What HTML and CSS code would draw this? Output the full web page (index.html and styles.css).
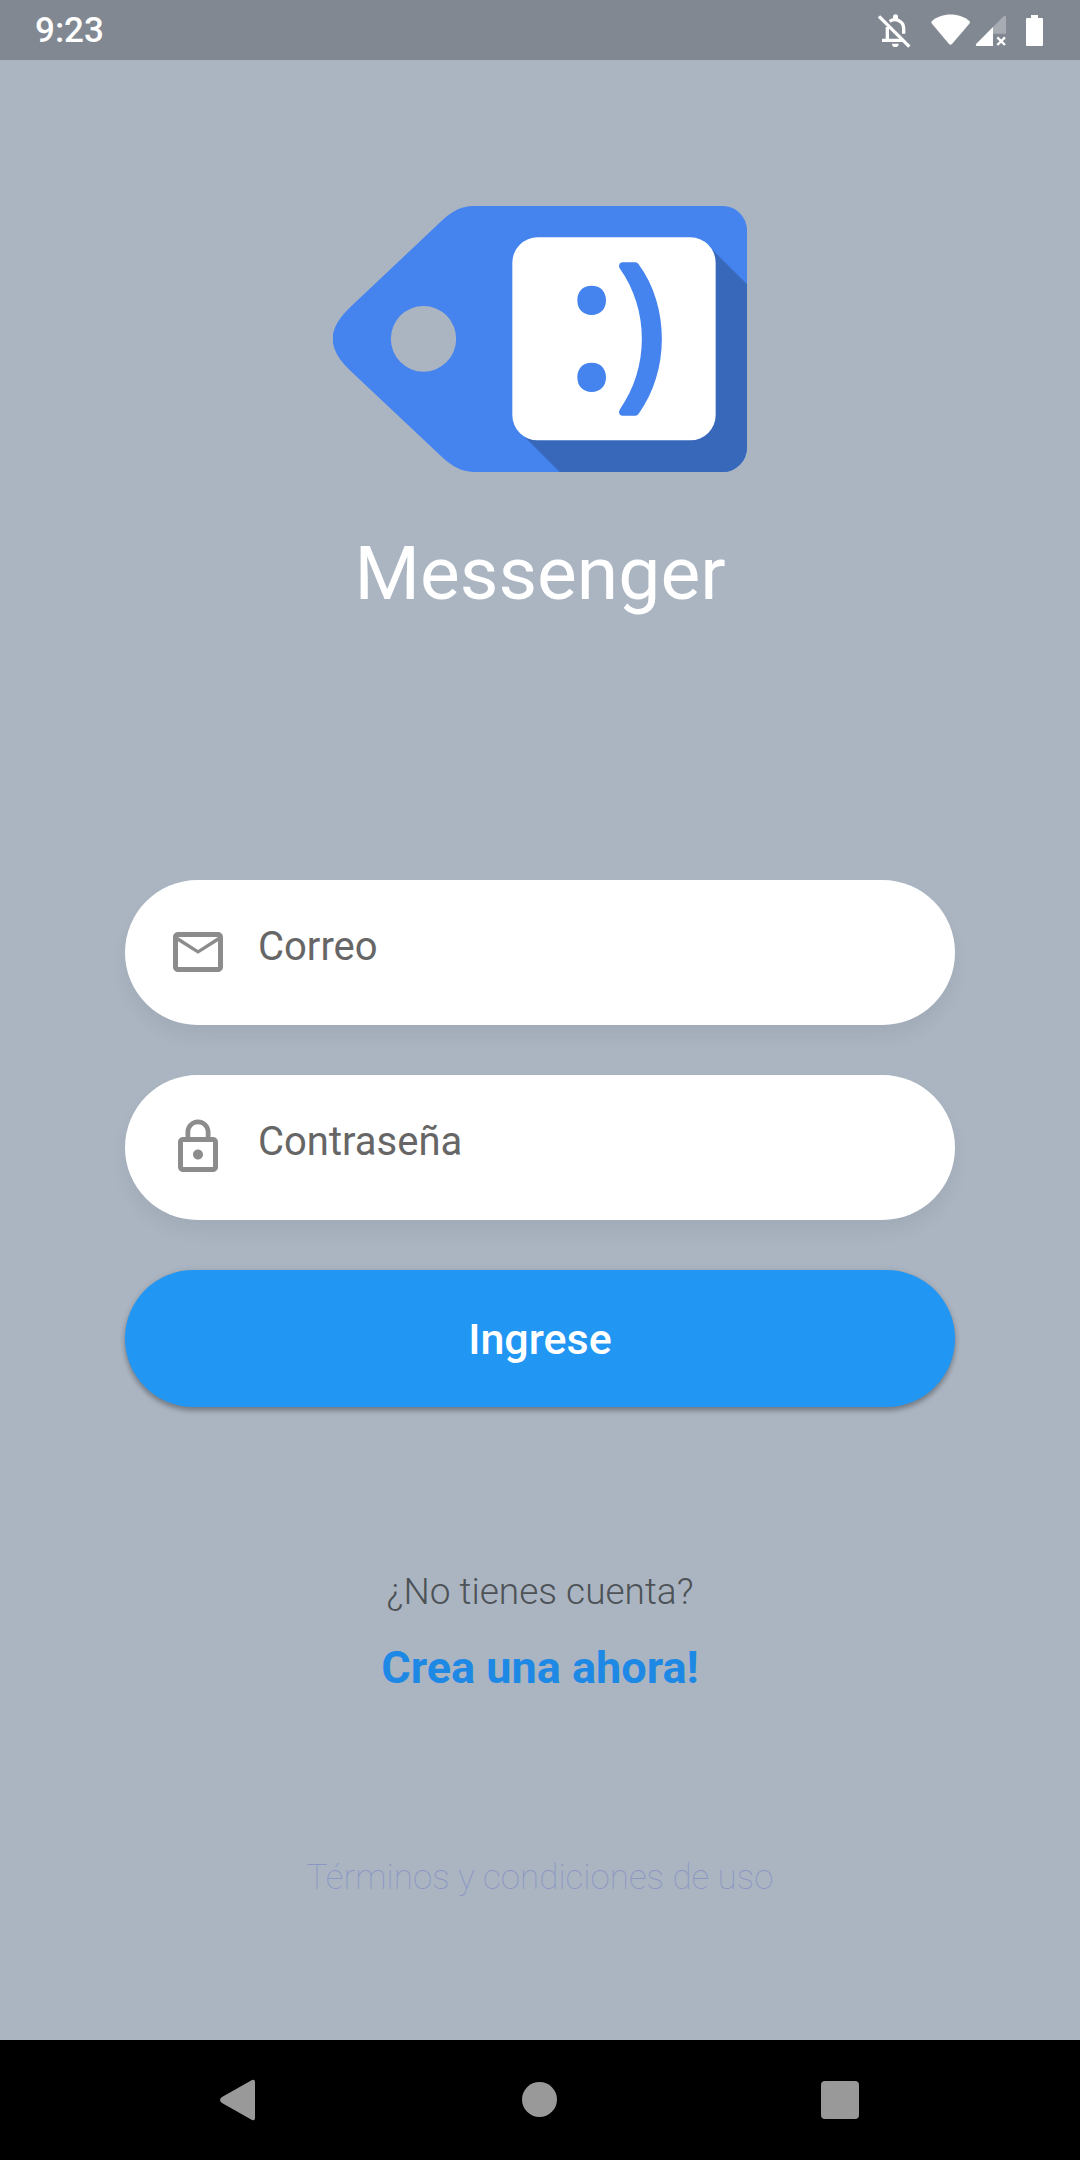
FILE: index.html
```html
<!DOCTYPE html>
<html lang="es">
<head>
<meta charset="utf-8">
<meta name="viewport" content="width=device-width, initial-scale=1">
<title>Messenger</title>
<link rel="stylesheet" href="styles.css">
</head>
<body>
<header class="status-bar">
  <time class="clock">9:23</time>
  <div class="status-icons">
    <svg class="status-icon" width="36" height="36" viewBox="75 36 108 108" aria-hidden="true">
      <g fill="none" stroke="#fff" stroke-width="10">
        <path d="M109 78V117M93 118H157M116 61C134 49 158 61 158 82V98"/>
        <path d="M84 46L175 137"/>
      </g>
      <path fill="#fff" d="M126 54V47a7.500 7.500 0 0 1 15 0V54zM123 128H143a10 10 0 0 1-20 0z"/>
    </svg>
    <svg class="status-icon wifi" width="41" height="36" viewBox="240 36 123 108" aria-hidden="true">
      <path fill="#fff" d="M245 61C274 34 330 34 359 61C360 63 360 65 358 68L306 129Q301.500 134 297 129L246 68Q243 64 245 61z"/>
    </svg>
    <svg class="status-icon signal" width="32" height="36" viewBox="375 36 96 108" aria-hidden="true">
      <path fill="#fff" fill-opacity=".3" d="M429 78L461 46Q468 42 468 49V98H429z"/>
      <path fill="#fff" d="M429 78V135H381Q375 133 379 128z"/>
      <path fill="none" stroke="#fff" stroke-width="7" d="M442 109L465 132M465 109L442 132"/>
    </svg>
    <svg class="status-icon battery" width="19" height="36" viewBox="525 36 57 108" aria-hidden="true">
      <path fill="#fff" d="M543 42H564V51H576Q579 51 579 54V132Q579 135 576 135H531Q528 135 528 132V54Q528 51 531 51H543z"/>
    </svg>
  </div>
</header>

<main class="login">
  <svg class="logo" width="414" height="266" viewBox="69 78 1242 798" aria-hidden="true">
    <path fill="#4583ee" fill-rule="evenodd" d="M490 78H1238A73 73 0 0 1 1311 151V803A73 73 0 0 1 1238 876H490C455 875 428 860 400 835L122 573C50 505 50 448 122 380L400 118C428 92 455 79 490 78zM340.500 378a98 98.500 0 1 0 0 197a98 98.500 0 1 0 0-197z"/>
    <path fill="#3868ba" d="M1205 207L1311 313V803A73 73 0 0 1 1238 876H749L645 772z"/>
    <rect x="607" y="172" width="610" height="609" rx="76" fill="#fff"/>
    <g fill="#4583ee">
      <path d="M845 317c27 0 43 18 43 44s-16 44-43 44-43-18-43-44 16-44 43-44zM845 548c27 0 43 18 43 44s-16 44-43 44-43-18-43-44 16-44 43-44z"/>
      <path d="M937 247H976Q982 247 986 253C1079 380 1079 574 986 701Q982 707 976 707H937C928 706 925 697 929 689C1018 564 1018 390 929 265C925 257 928 248 937 247z"/>
    </g>
  </svg>
  <h1 class="title">Messenger</h1>

  <form class="form">
    <div class="field">
      <svg class="field-icon" width="60" height="60" viewBox="0 0 24 24" aria-hidden="true"><path d="M20 4H4c-1.100 0-2 .9-2 2v12c0 1.100.9 2 2 2h16c1.100 0 2-.9 2-2V6c0-1.100-.9-2-2-2zm0 14H4V7.700l8 5 8-5V18zm-8-6.800L4 6h16l-8 5.200z"/></svg>
      <input class="input" type="email" placeholder="Correo" aria-label="Correo">
    </div>
    <div class="field">
      <svg class="field-icon" width="60" height="60" viewBox="0 0 24 24" aria-hidden="true"><path d="M12 17c1.100 0 2-.9 2-2s-.9-2-2-2-2 .9-2 2 .9 2 2 2zm6-9h-1V6c0-2.760-2.240-5-5-5S7 3.240 7 6v2H6c-1.100 0-2 .9-2 2v10c0 1.100.9 2 2 2h12c1.100 0 2-.9 2-2V10c0-1.100-.9-2-2-2zM8.900 6c0-1.710 1.390-3.100 3.100-3.100s3.100 1.390 3.100 3.100v2H8.900V6zM18 20H6V10h12v10z"/></svg>
      <input class="input" type="password" placeholder="Contraseña" aria-label="Contraseña">
    </div>
    <button class="submit" type="submit">Ingrese</button>
  </form>

  <section class="signup">
    <p class="signup-question">¿No tienes cuenta?</p>
    <a class="signup-link" href="#registro">Crea una ahora!</a>
  </section>

  <p class="terms">Términos y condiciones de uso</p>
</main>

<nav class="nav-bar" aria-label="Sistema">
  <button class="nav-button" type="button" aria-label="Atrás">
    <svg width="60" height="60" viewBox="0 0 60 60" aria-hidden="true"><path fill="#999" d="M45 12V48Q45 51 42 50L12 33Q8 30 12 27L42 10Q45 9 45 12z"/></svg>
  </button>
  <button class="nav-button" type="button" aria-label="Inicio">
    <svg width="60" height="60" viewBox="0 0 60 60" aria-hidden="true"><circle cx="29.500" cy="29.500" r="17.500" fill="#999"/></svg>
  </button>
  <button class="nav-button" type="button" aria-label="Recientes">
    <svg width="60" height="60" viewBox="0 0 60 60" aria-hidden="true"><rect x="11" y="11" width="38" height="38" rx="4" fill="#999"/></svg>
  </button>
</nav>
</body>
</html>
```
FILE: styles.css
```css
* {
  box-sizing: border-box;
}

body {
  margin: 0;
  min-height: 100vh;
  display: flex;
  flex-direction: column;
  background: #abb5c2;
  font-family: Roboto, "Liberation Sans", sans-serif;
}

.status-bar {
  display: flex;
  align-items: center;
  justify-content: space-between;
  height: 60px;
  padding: 2px 36px 0 35px;
  background: #818892;
  color: #fff;
}

.clock {
  font-size: 35px;
  font-weight: 500;
  line-height: 40px;
}

.status-icons {
  display: flex;
}

.wifi,
.battery {
  margin-left: 18px;
}

.signal {
  margin-left: 4px;
}

.login {
  flex: 1;
  display: flex;
  flex-direction: column;
  align-items: center;
  padding: 146px 125px 0;
}

.title {
  margin: 57px 0 0;
  color: #fff;
  font-size: 75px;
  font-weight: 400;
  line-height: 88px;
}

.form {
  align-self: stretch;
  display: flex;
  flex-direction: column;
  gap: 50px;
  margin-top: 263px;
}

.field {
  display: flex;
  align-items: center;
  gap: 30px;
  height: 145px;
  padding: 0 50px 1px 43px;
  border-radius: 75px;
  background: #fff;
  box-shadow: 0 12px 18px rgba(0, 0, 0, 0.05);
}

.field-icon {
  flex: none;
  fill: #8c8c8c;
}

.input {
  flex: 1;
  min-width: 0;
  height: 100%;
  padding: 0 0 12px;
  border: 0;
  outline: 0;
  background: none;
  color: #222;
  font-family: inherit;
  font-size: 40px;
}

.input::placeholder {
  color: #666;
  opacity: 1;
}

.submit {
  height: 137px;
  border: 0;
  border-radius: 75px;
  background: #2196f3;
  box-shadow: 0 4px 5px rgba(0, 0, 0, 0.25), 0 1px 6px rgba(0, 0, 0, 0.12);
  color: #fff;
  font-family: inherit;
  font-size: 43px;
  font-weight: 500;
}

.signup {
  display: flex;
  flex-direction: column;
  align-items: center;
  gap: 27px;
  margin-top: 163px;
}

.signup-question {
  margin: 0;
  color: #4d5256;
  font-size: 37px;
  font-weight: 300;
  line-height: 44px;
}

.signup-link {
  color: #1e88e5;
  font-size: 45px;
  font-weight: 700;
  line-height: 53px;
  text-decoration: none;
}

.terms {
  margin: 163px 0 0;
  color: #8b97c3;
  font-size: 35px;
  font-weight: 100;
  line-height: 41px;
}

.nav-bar {
  display: flex;
  align-items: center;
  justify-content: center;
  gap: 240px;
  height: 120px;
  background: #000;
}

.nav-button {
  display: flex;
  padding: 0;
  border: 0;
  background: none;
}
```
